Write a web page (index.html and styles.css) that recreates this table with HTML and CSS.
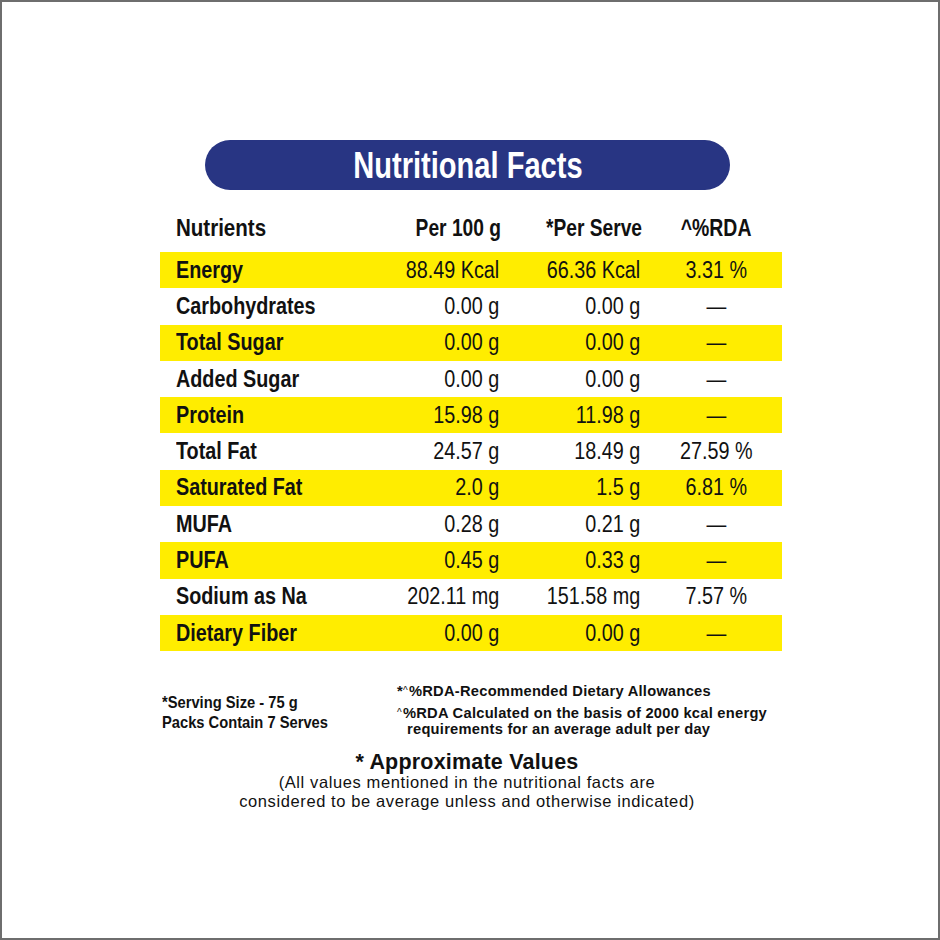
FILE: index.html
```html
<!DOCTYPE html>
<html lang="en">
<head>
    <meta charset="UTF-8">
    <title>Nutritional Facts</title>
    <link rel="stylesheet" href="styles.css">
</head>
<body>
    <div class="frame">
        <div class="title-pill"><span class="title-text">Nutritional Facts</span></div>

        <div class="facts">
            <div class="row head">
                <div class="name">Nutrients</div>
                <div class="num">Per 100 g</div>
                <div class="num">*Per Serve</div>
                <div class="rda">^%RDA</div>
            </div>
            <div class="row hl">
                <div class="name">Energy</div>
                <div class="num">88.49 Kcal</div>
                <div class="num">66.36 Kcal</div>
                <div class="rda">3.31 %</div>
            </div>
            <div class="row">
                <div class="name">Carbohydrates</div>
                <div class="num">0.00 g</div>
                <div class="num">0.00 g</div>
                <div class="rda">—</div>
            </div>
            <div class="row hl">
                <div class="name">Total Sugar</div>
                <div class="num">0.00 g</div>
                <div class="num">0.00 g</div>
                <div class="rda">—</div>
            </div>
            <div class="row">
                <div class="name">Added Sugar</div>
                <div class="num">0.00 g</div>
                <div class="num">0.00 g</div>
                <div class="rda">—</div>
            </div>
            <div class="row hl">
                <div class="name">Protein</div>
                <div class="num">15.98 g</div>
                <div class="num">11.98 g</div>
                <div class="rda">—</div>
            </div>
            <div class="row">
                <div class="name">Total Fat</div>
                <div class="num">24.57 g</div>
                <div class="num">18.49 g</div>
                <div class="rda">27.59 %</div>
            </div>
            <div class="row hl">
                <div class="name">Saturated Fat</div>
                <div class="num">2.0 g</div>
                <div class="num">1.5 g</div>
                <div class="rda">6.81 %</div>
            </div>
            <div class="row">
                <div class="name">MUFA</div>
                <div class="num">0.28 g</div>
                <div class="num">0.21 g</div>
                <div class="rda">—</div>
            </div>
            <div class="row hl">
                <div class="name">PUFA</div>
                <div class="num">0.45 g</div>
                <div class="num">0.33 g</div>
                <div class="rda">—</div>
            </div>
            <div class="row">
                <div class="name">Sodium as Na</div>
                <div class="num">202.11 mg</div>
                <div class="num">151.58 mg</div>
                <div class="rda">7.57 %</div>
            </div>
            <div class="row hl">
                <div class="name">Dietary Fiber</div>
                <div class="num">0.00 g</div>
                <div class="num">0.00 g</div>
                <div class="rda">—</div>
            </div>
        </div>

        <div class="notes">
            <div class="serving">
                <div>*Serving Size - 75 g</div>
                <div>Packs Contain 7 Serves</div>
            </div>
            <div class="rda-notes">
                <div class="first">*<span class="caret">^</span>%RDA-Recommended Dietary Allowances</div>
                <div><span class="caret">^</span>%RDA Calculated on the basis of 2000 kcal energy</div>
                <div class="indent">requirements for an average adult per day</div>
            </div>
        </div>

        <div class="approx">
            <div class="approx-title">* Approximate Values</div>
            <div>(All values mentioned in the nutritional facts are</div>
            <div>considered to be average unless and otherwise indicated)</div>
        </div>
    </div>
</body>
</html>
```

FILE: styles.css
```css
body {
    margin: 0;
    padding: 0;
    background-color: #fff;
    color: #111;
    font-family: "Liberation Sans", Arial, sans-serif;
}

.frame {
    width: 940px;
    height: 940px;
    box-sizing: border-box;
    border: 2px solid #6e6e6e;
    padding-top: 138px;
}

/* the artwork uses a condensed face, so the text is narrowed */
.title-pill {
    width: 525px;
    height: 50px;
    margin-left: 203px;
    border-radius: 25px;
    background-color: #283583;
    color: #fff;
    font-weight: bold;
    font-size: 37.5px;
    line-height: 50px;
    text-align: center;
}

.title-text {
    display: inline-block;
    transform: scaleX(0.775);
    transform-origin: center;
}

.facts {
    width: 622px;
    margin-left: 158px;
    margin-top: 20px;
}

.row {
    display: grid;
    grid-template-columns: 183px 142px 141px 140px;
    height: 36.3px;
    align-items: center;
    font-size: 23px;
    padding-left: 16px;
    box-sizing: border-box;
}

.row.head {
    height: 42px;
    font-weight: bold;
    font-size: 24px;
    align-items: start;
    padding-top: 4px;
}

.row.hl {
    background-color: #ffed00;
}

.name {
    font-weight: bold;
    transform: scaleX(0.86);
    transform-origin: left center;
    white-space: nowrap;
}

.num {
    text-align: right;
    padding-right: 2px;
    white-space: nowrap;
    transform: scaleX(0.86);
    transform-origin: right center;
}

.head .name {
    transform: scaleX(0.855);
}

.head .num {
    padding-right: 0;
    transform: scaleX(0.8);
}

.rda {
    text-align: center;
    padding-left: 10px;
    white-space: nowrap;
    transform: scaleX(0.86);
}

.head .rda {
    transform: scaleX(0.81);
}

.notes {
    display: flex;
    align-items: flex-start;
    margin-top: 31.5px;
    margin-left: 160px;
    font-weight: bold;
}

.serving {
    width: 235px;
    flex-shrink: 0;
    font-size: 17px;
    line-height: 20px;
    white-space: nowrap;
    transform: scaleX(0.865);
    transform-origin: left center;
    padding-top: 10px;
}

.rda-notes {
    font-size: 14.7px;
    line-height: 16.5px;
    letter-spacing: 0.25px;
    white-space: nowrap;
}

.rda-notes .first {
    margin-bottom: 5.5px;
}

.caret {
    font-size: 10px;
    font-weight: normal;
    vertical-align: 2px;
    margin-right: 1px;
}

.indent {
    padding-left: 10px;
}

.approx {
    margin-top: 14.5px;
    text-align: center;
    font-size: 16.5px;
    line-height: 18.5px;
    letter-spacing: 0.6px;
    padding-right: 6px;
}

.approx-title {
    font-weight: bold;
    font-size: 21.5px;
    line-height: 21px;
    letter-spacing: 0.2px;
}
```
